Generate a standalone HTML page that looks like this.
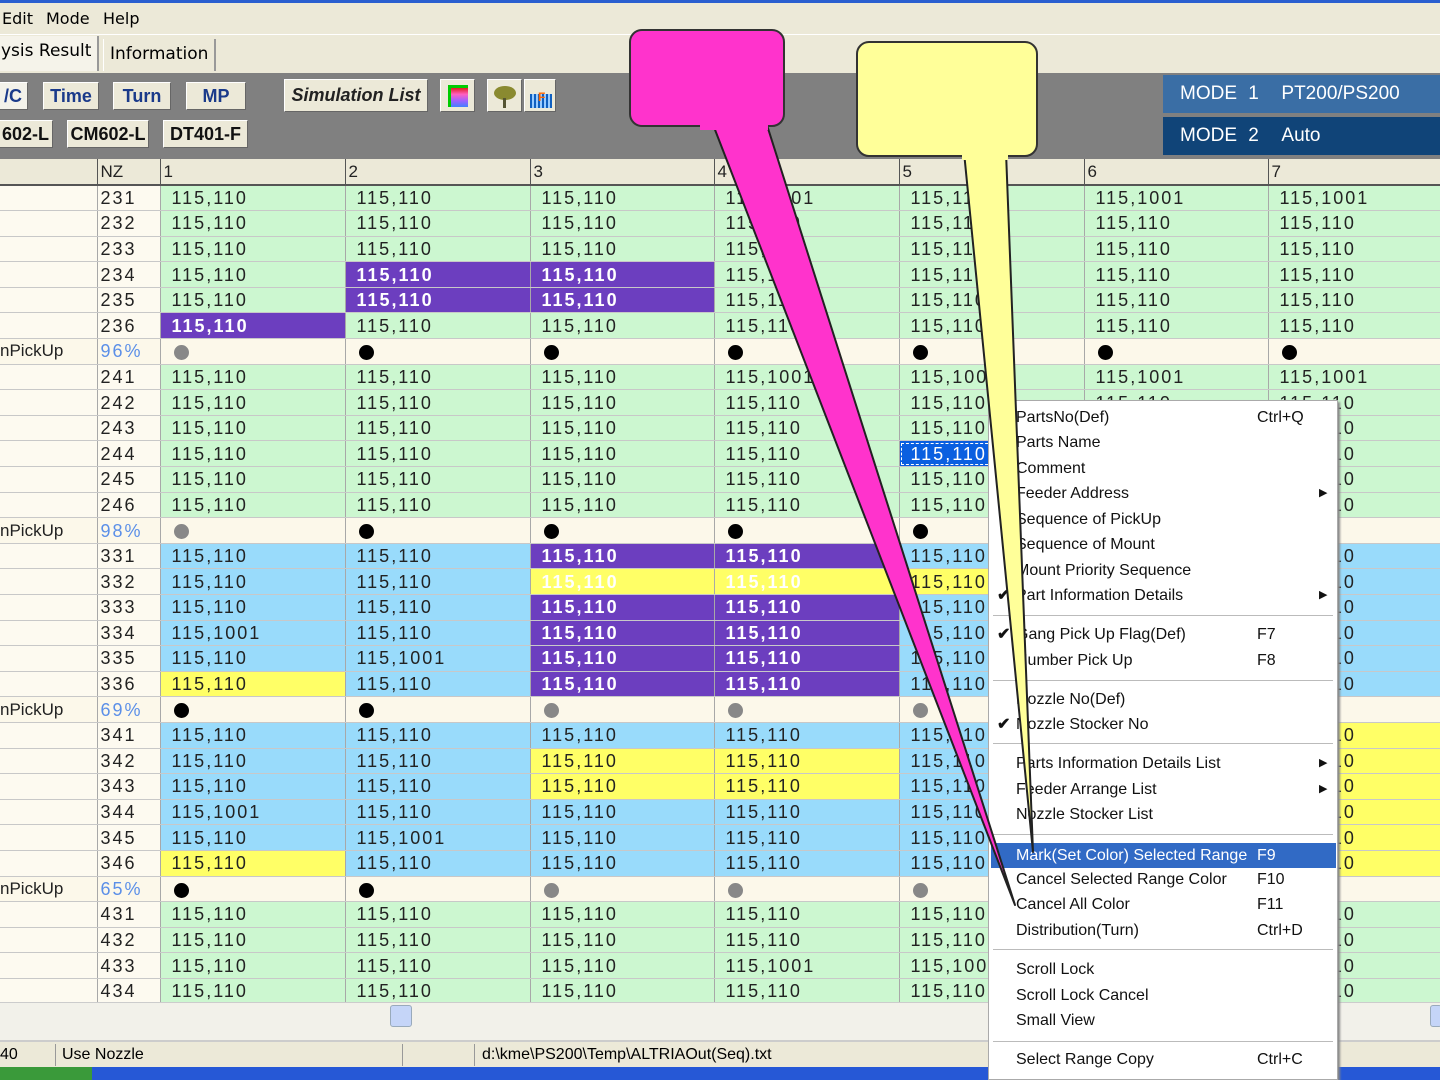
<!DOCTYPE html>
<html><head><meta charset="utf-8"><style>
*{box-sizing:border-box;margin:0;padding:0}
body{width:1440px;height:1080px;overflow:hidden;position:relative;background:#ece9d8;font-family:"DejaVu Sans","Liberation Sans",sans-serif}
.abs{position:absolute}
.menubar{left:0;top:0;width:1440px;height:34px;background:#ece9d8;border-top:3px solid #2a5fd0;font-size:16px;color:#000}
.menubar span{position:absolute;top:6px}
.tabs{left:0;top:34px;width:1440px;height:39px;background:#ece9d8;border-top:1px solid #fff}
.tab{position:absolute;top:4px;height:32px;font-size:17px;padding:5px 6px;border-right:2px solid #999;border-left:1px solid #fff}
.tool{left:0;top:73px;width:1440px;height:86px;background:#808080}
.btn{position:absolute;height:28px;background:#ece9d8;border:1px solid #fff;border-right-color:#666;border-bottom-color:#666;font-family:"Liberation Sans",sans-serif;font-weight:bold;font-size:18px;text-align:center;line-height:26px}
.bl{color:#1a3a8a}
.mode{position:absolute;left:1163px;width:277px;height:38px;color:#fff;font-family:"Liberation Sans",sans-serif;font-size:19px;line-height:38px;padding-left:17px;word-spacing:6px}
table{position:absolute;left:0;top:159px;border-collapse:collapse;table-layout:fixed;width:1440px;font-family:"Liberation Sans",sans-serif;font-size:18px;letter-spacing:2px;color:#222}
td{height:25.6px;padding:0 0 0 11px;border-right:1px solid #a8a8a8;border-bottom:1px solid #c8c8c8;white-space:nowrap;overflow:hidden;line-height:24px}
tr.h td{height:26px;background:#ece9d8;border-bottom:2px solid #555;font-size:17px;letter-spacing:0;padding-left:3px;border-right:1px solid #555}
td.l{background:#fdfaf0;padding-left:0;font-size:17px;letter-spacing:0}
td.n{background:#fdfaf0;padding-left:3px;font-size:18px}
tr.g td{background:#ccf7d0}
tr.b td{background:#99dbfb}
tr.g td.l,tr.g td.n,tr.b td.l,tr.b td.n{background:#fdfaf0}
tr.k td{background:#fcf8ea}
tr td.p{background:#6c3ebf;color:#fff;font-weight:bold}
tr td.y{background:#ffff66}
tr td.yw{background:#ffff66;color:#fff;font-weight:bold}
tr td.s{background:#0a5fe0;color:#fff;outline:1px dashed #fff;outline-offset:-3px}
.pc{color:#5b8fe8;font-size:17px}
i.d{display:inline-block;width:15px;height:15px;border-radius:50%;background:#000;margin-left:2px;vertical-align:middle}
i.gr{background:#888}
.menu{left:988px;top:400px;width:350px;height:680px;background:#fff;border:1px solid #aaa;box-shadow:2px 2px 2px #888;font-family:"Liberation Sans",sans-serif;font-size:16px;color:#111}
.mi{position:absolute;left:0;width:348px;height:25px;line-height:25px;padding-left:27px}
.mi .k{position:absolute;left:268px}
.mi .ar{position:absolute;left:330px;font-size:11px}
.mi .ck{position:absolute;left:8px;font-weight:bold}
.sep{position:absolute;left:4px;width:340px;height:2px;border-top:1px solid #bbb;border-bottom:1px solid #fff}
.hl{background:#316ac5;color:#fff}
.status{left:0;top:1040px;width:1440px;height:28px;background:#ece9d8;border-top:2px solid #ccc;font-family:"Liberation Sans",sans-serif;font-size:16px}
.status span{position:absolute;top:4px}
.task{left:0;top:1067px;width:1440px;height:13px;background:#2658d6}
</style></head><body>
<div class="abs menubar"><span style="left:2px">Edit</span><span style="left:46px">Mode</span><span style="left:103px">Help</span></div>
<div class="abs tabs">
<div class="tab" style="left:-6px;top:1px;height:35px;background:#f5f3ea">ysis Result</div>
<div class="tab" style="left:103px">Information</div>
</div>
<div class="abs tool">
<div class="btn bl" style="left:-2px;top:9px;width:30px;background:#f3f2ea">/C</div>
<div class="btn bl" style="left:43px;top:9px;width:56px">Time</div>
<div class="btn bl" style="left:113px;top:9px;width:58px">Turn</div>
<div class="btn bl" style="left:186px;top:9px;width:60px">MP</div>
<div class="btn" style="left:284px;top:6px;width:144px;height:33px;font-style:italic;line-height:31px;color:#222">Simulation List</div>
<div class="btn" style="left:440px;top:6px;width:35px;height:33px"><div style="position:absolute;left:7px;top:5px;width:20px;height:22px;background:linear-gradient(#e02020,#ff60c0,#a060ff,#4080ff);border-left:3px solid #0c0;border-top:3px solid #0c0"></div></div>
<div class="btn" style="left:487px;top:6px;width:35px;height:33px"><div style="position:absolute;left:6px;top:6px;width:22px;height:14px;border-radius:50%;background:#8a8a30"></div><div style="position:absolute;left:15px;top:18px;width:3px;height:10px;background:#553"></div></div>
<div class="btn" style="left:524px;top:6px;width:32px;height:33px"><div style="position:absolute;left:5px;top:14px;width:22px;height:14px;background:repeating-linear-gradient(90deg,#1060c0 0 2px,#9cf 2px 4px)"></div><div style="position:absolute;left:13px;top:4px;color:#f60;font-size:12px">F</div></div>
<div class="btn" style="left:-2px;top:47px;width:55px;color:#111">602-L</div>
<div class="btn" style="left:67px;top:47px;width:82px;color:#111">CM602-L</div>
<div class="btn" style="left:163px;top:47px;width:85px;color:#111">DT401-F</div>
<div class="mode" style="top:2px;background:#3a6ea5">MODE 1 &nbsp;PT200/PS200</div>
<div class="mode" style="top:44px;background:#104478">MODE 2 &nbsp;Auto</div>
</div>
<table>
<colgroup><col style="width:97px"><col style="width:63px"><col style="width:185px"><col style="width:185px"><col style="width:184px"><col style="width:185px"><col style="width:185px"><col style="width:184px"><col style="width:172px"></colgroup>
<tr class="h"><td></td><td>NZ</td><td>1</td><td>2</td><td>3</td><td>4</td><td>5</td><td>6</td><td>7</td></tr>
<tr class="g"><td class="l"></td><td class="n">231</td><td>115,110</td><td>115,110</td><td>115,110</td><td>115,1001</td><td>115,110</td><td>115,1001</td><td>115,1001</td></tr>
<tr class="g"><td class="l"></td><td class="n">232</td><td>115,110</td><td>115,110</td><td>115,110</td><td>115,110</td><td>115,110</td><td>115,110</td><td>115,110</td></tr>
<tr class="g"><td class="l"></td><td class="n">233</td><td>115,110</td><td>115,110</td><td>115,110</td><td>115,110</td><td>115,110</td><td>115,110</td><td>115,110</td></tr>
<tr class="g"><td class="l"></td><td class="n">234</td><td>115,110</td><td class="p">115,110</td><td class="p">115,110</td><td>115,110</td><td>115,110</td><td>115,110</td><td>115,110</td></tr>
<tr class="g"><td class="l"></td><td class="n">235</td><td>115,110</td><td class="p">115,110</td><td class="p">115,110</td><td>115,110</td><td>115,110</td><td>115,110</td><td>115,110</td></tr>
<tr class="g"><td class="l"></td><td class="n">236</td><td class="p">115,110</td><td>115,110</td><td>115,110</td><td>115,110</td><td>115,110</td><td>115,110</td><td>115,110</td></tr>
<tr class="k"><td class="l">nPickUp</td><td class="n pc">96%</td><td><i class="d gr"></i></td><td><i class="d"></i></td><td><i class="d"></i></td><td><i class="d"></i></td><td><i class="d"></i></td><td><i class="d"></i></td><td><i class="d"></i></td></tr>
<tr class="g"><td class="l"></td><td class="n">241</td><td>115,110</td><td>115,110</td><td>115,110</td><td>115,1001</td><td>115,1001</td><td>115,1001</td><td>115,1001</td></tr>
<tr class="g"><td class="l"></td><td class="n">242</td><td>115,110</td><td>115,110</td><td>115,110</td><td>115,110</td><td>115,110</td><td>115,110</td><td>115,110</td></tr>
<tr class="g"><td class="l"></td><td class="n">243</td><td>115,110</td><td>115,110</td><td>115,110</td><td>115,110</td><td>115,110</td><td>115,110</td><td>115,110</td></tr>
<tr class="g"><td class="l"></td><td class="n">244</td><td>115,110</td><td>115,110</td><td>115,110</td><td>115,110</td><td class="s">115,110</td><td>115,110</td><td>115,110</td></tr>
<tr class="g"><td class="l"></td><td class="n">245</td><td>115,110</td><td>115,110</td><td>115,110</td><td>115,110</td><td>115,110</td><td>115,110</td><td>115,110</td></tr>
<tr class="g"><td class="l"></td><td class="n">246</td><td>115,110</td><td>115,110</td><td>115,110</td><td>115,110</td><td>115,110</td><td>115,110</td><td>115,110</td></tr>
<tr class="k"><td class="l">nPickUp</td><td class="n pc">98%</td><td><i class="d gr"></i></td><td><i class="d"></i></td><td><i class="d"></i></td><td><i class="d"></i></td><td><i class="d"></i></td><td><i class="d"></i></td><td><i class="d"></i></td></tr>
<tr class="b"><td class="l"></td><td class="n">331</td><td>115,110</td><td>115,110</td><td class="p">115,110</td><td class="p">115,110</td><td>115,110</td><td>115,110</td><td>115,110</td></tr>
<tr class="b"><td class="l"></td><td class="n">332</td><td>115,110</td><td>115,110</td><td class="yw">115,110</td><td class="yw">115,110</td><td class="y">115,110</td><td>115,110</td><td>115,110</td></tr>
<tr class="b"><td class="l"></td><td class="n">333</td><td>115,110</td><td>115,110</td><td class="p">115,110</td><td class="p">115,110</td><td>115,110</td><td>115,110</td><td>115,110</td></tr>
<tr class="b"><td class="l"></td><td class="n">334</td><td>115,1001</td><td>115,110</td><td class="p">115,110</td><td class="p">115,110</td><td>115,110</td><td>115,110</td><td>115,110</td></tr>
<tr class="b"><td class="l"></td><td class="n">335</td><td>115,110</td><td>115,1001</td><td class="p">115,110</td><td class="p">115,110</td><td>115,110</td><td>115,110</td><td>115,110</td></tr>
<tr class="b"><td class="l"></td><td class="n">336</td><td class="y">115,110</td><td>115,110</td><td class="p">115,110</td><td class="p">115,110</td><td>115,110</td><td>115,110</td><td>115,110</td></tr>
<tr class="k"><td class="l">nPickUp</td><td class="n pc">69%</td><td><i class="d"></i></td><td><i class="d"></i></td><td><i class="d gr"></i></td><td><i class="d gr"></i></td><td><i class="d gr"></i></td><td></td><td></td></tr>
<tr class="b"><td class="l"></td><td class="n">341</td><td>115,110</td><td>115,110</td><td>115,110</td><td>115,110</td><td>115,110</td><td>115,110</td><td class="y">115,110</td></tr>
<tr class="b"><td class="l"></td><td class="n">342</td><td>115,110</td><td>115,110</td><td class="y">115,110</td><td class="y">115,110</td><td>115,110</td><td>115,110</td><td class="y">115,110</td></tr>
<tr class="b"><td class="l"></td><td class="n">343</td><td>115,110</td><td>115,110</td><td class="y">115,110</td><td class="y">115,110</td><td>115,110</td><td>115,110</td><td class="y">115,110</td></tr>
<tr class="b"><td class="l"></td><td class="n">344</td><td>115,1001</td><td>115,110</td><td>115,110</td><td>115,110</td><td>115,110</td><td>115,110</td><td class="y">115,110</td></tr>
<tr class="b"><td class="l"></td><td class="n">345</td><td>115,110</td><td>115,1001</td><td>115,110</td><td>115,110</td><td>115,110</td><td>115,110</td><td class="y">115,110</td></tr>
<tr class="b"><td class="l"></td><td class="n">346</td><td class="y">115,110</td><td>115,110</td><td>115,110</td><td>115,110</td><td>115,110</td><td>115,110</td><td class="y">115,110</td></tr>
<tr class="k"><td class="l">nPickUp</td><td class="n pc">65%</td><td><i class="d"></i></td><td><i class="d"></i></td><td><i class="d gr"></i></td><td><i class="d gr"></i></td><td><i class="d gr"></i></td><td></td><td></td></tr>
<tr class="g"><td class="l"></td><td class="n">431</td><td>115,110</td><td>115,110</td><td>115,110</td><td>115,110</td><td>115,110</td><td>115,110</td><td>115,110</td></tr>
<tr class="g"><td class="l"></td><td class="n">432</td><td>115,110</td><td>115,110</td><td>115,110</td><td>115,110</td><td>115,110</td><td>115,110</td><td>115,110</td></tr>
<tr class="g"><td class="l"></td><td class="n">433</td><td>115,110</td><td>115,110</td><td>115,110</td><td>115,1001</td><td>115,1001</td><td>115,110</td><td>115,110</td></tr>
<tr class="g"><td class="l"></td><td class="n">434</td><td>115,110</td><td>115,110</td><td>115,110</td><td>115,110</td><td>115,110</td><td>115,110</td><td>115,110</td></tr>
</table>
<div class="abs" style="left:0;top:1002px;width:1440px;height:38px;background:#f2f1ea;border-top:1px solid #ccc"></div>
<div class="abs" style="left:390px;top:1005px;width:22px;height:22px;background:#c5d5f8;border:1px solid #9ab;border-radius:3px"></div>
<div class="abs" style="left:1430px;top:1005px;width:12px;height:22px;background:#c5d5f8;border:1px solid #9ab;border-radius:3px"></div>
<div class="abs status"><span style="left:0">40</span><span style="left:62px">Use Nozzle</span><span style="left:482px">d:\kme\PS200\Temp\ALTRIAOut(Seq).txt</span>
<div class="abs" style="left:55px;top:2px;height:22px;border-left:1px solid #999"></div><div class="abs" style="left:402px;top:2px;height:22px;border-left:1px solid #999"></div><div class="abs" style="left:474px;top:2px;height:22px;border-left:1px solid #999"></div></div>
<div class="abs task"><div class="abs" style="left:0;top:0;width:92px;height:13px;background:#3a9a3a"></div></div>
<div class="abs menu">
<div class="mi" style="top:4px">PartsNo(Def)<span class="k">Ctrl+Q</span></div>
<div class="mi" style="top:29px">Parts Name</div>
<div class="mi" style="top:55px">Comment</div>
<div class="mi" style="top:80px">Feeder Address<span class="ar">▶</span></div>
<div class="mi" style="top:106px">Sequence of PickUp</div>
<div class="mi" style="top:131px">Sequence of Mount</div>
<div class="mi" style="top:157px">Mount Priority Sequence</div>
<div class="mi" style="top:182px"><span class="ck">✔</span>Part Information Details<span class="ar">▶</span></div>
<div class="sep" style="top:214px"></div>
<div class="mi" style="top:221px"><span class="ck">✔</span>Gang Pick Up Flag(Def)<span class="k">F7</span></div>
<div class="mi" style="top:247px">Number Pick Up<span class="k">F8</span></div>
<div class="sep" style="top:279px"></div>
<div class="mi" style="top:286px">Nozzle No(Def)</div>
<div class="mi" style="top:311px"><span class="ck">✔</span>Nozzle Stocker No</div>
<div class="sep" style="top:342px"></div>
<div class="mi" style="top:350px">Parts Information Details List<span class="ar">▶</span></div>
<div class="mi" style="top:376px">Feeder Arrange List<span class="ar">▶</span></div>
<div class="mi" style="top:401px">Nozzle Stocker List</div>
<div class="sep" style="top:433px"></div>
<div class="mi hl" style="top:442px;left:2px;width:345px;padding-left:25px">Mark(Set Color) Selected Range<span class="k" style="left:266px">F9</span></div>
<div class="mi" style="top:466px">Cancel Selected Range Color<span class="k">F10</span></div>
<div class="mi" style="top:491px">Cancel All Color<span class="k">F11</span></div>
<div class="mi" style="top:517px">Distribution(Turn)<span class="k">Ctrl+D</span></div>
<div class="sep" style="top:548px"></div>
<div class="mi" style="top:556px">Scroll Lock</div>
<div class="mi" style="top:582px">Scroll Lock Cancel</div>
<div class="mi" style="top:607px">Small View</div>
<div class="sep" style="top:640px"></div>
<div class="mi" style="top:646px">Select Range Copy<span class="k">Ctrl+C</span></div>
</div>
<svg class="abs" style="left:0;top:0" width="1440" height="1080">
<polygon points="712,122 766,122 1015,905" fill="#ff33cc" stroke="#222" stroke-width="2" stroke-linejoin="round"/>
<rect x="630" y="30" width="154" height="96" rx="12" fill="#ff33cc" stroke="#333" stroke-width="2"/>
<rect x="700" y="118" width="68" height="12" fill="#ff33cc"/>
<polygon points="964,152 1006,152 1033,852" fill="#ffff99" stroke="#222" stroke-width="2" stroke-linejoin="round"/>
<rect x="857" y="42" width="180" height="114" rx="12" fill="#ffff99" stroke="#333" stroke-width="2"/>
<rect x="962" y="148" width="46" height="12" fill="#ffff99"/>
</svg>
</body></html>
